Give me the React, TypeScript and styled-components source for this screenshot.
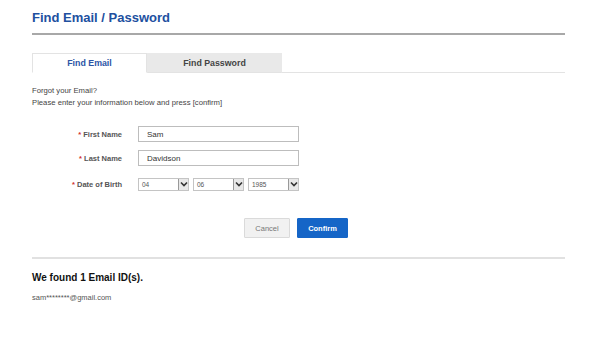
import React from 'react';
import styled, {createGlobalStyle} from "styled-components";

const GlobalStyle = createGlobalStyle`
  body {
    margin: 0;
    background: #fff;
    font-family: "Liberation Sans", Arial, sans-serif;
  }
`

const fields = [
    {label: "First Name", value: "Sam"},
    {label: "Last Name", value: "Davidson"},
]

const Chevron = () => (
    <svg width="8" height="6" viewBox="0 0 8 6">
        <path d="M1 1.5 L4 4.5 L7 1.5" fill="none" stroke="#333" strokeWidth="1.6"/>
    </svg>
)

const Select = ({value}: { value: string }) => (
    <SelectBox>
        <span>{value}</span>
        <ArrowBox><Chevron/></ArrowBox>
    </SelectBox>
)

export default function App() {
    return (
        <Page>
            <GlobalStyle/>
            <Title>Find Email / Password</Title>

            <Tabs>
                <Tab active>Find Email</Tab>
                <Tab>Find Password</Tab>
            </Tabs>

            <Intro>
                Forgot your Email?<br/>
                Please enter your information below and press [confirm]
            </Intro>

            <Form>
                {fields.map(f => (
                    <Row key={f.label}>
                        <Label><Star>*</Star> {f.label}</Label>
                        <TextInput>{f.value}</TextInput>
                    </Row>
                ))}
                <Row>
                    <Label><Star>*</Star> Date of Birth</Label>
                    <SelectGroup>
                        <Select value="04"/>
                        <Select value="06"/>
                        <Select value="1985"/>
                    </SelectGroup>
                </Row>
            </Form>

            <Buttons>
                <Button>Cancel</Button>
                <Button primary>Confirm</Button>
            </Buttons>

            <Result>
                <ResultTitle>We found 1 Email ID(s).</ResultTitle>
                <ResultText>sam********@gmail.com</ResultText>
            </Result>
        </Page>
    );
}

const Page = styled.div`
  width: 533px;
  margin-left: 32px;
  padding-top: 8px;
`

const Title = styled.h1`
  margin: 0;
  font-size: 13px;
  font-weight: bold;
  color: #21509f;
  line-height: 20px;
  padding-bottom: 5px;
  border-bottom: 2px solid #a8a8a8;
`

const Tabs = styled.div`
  display: flex;
  margin-top: 18px;
  height: 19px;
  border-bottom: 1px solid #e3e3e3;
`

const Tab = styled.div<{ active?: boolean }>`
  display: flex;
  align-items: center;
  justify-content: center;
  box-sizing: border-box;
  width: ${p => p.active ? 115 : 135}px;
  height: 20px;
  font-size: 8.8px;
  font-weight: bold;
  color: ${p => p.active ? "#2c55a6" : "#444"};
  background: ${p => p.active ? "#fff" : "#e9e9e9"};
  border: 1px solid ${p => p.active ? "#e3e3e3" : "#e9e9e9"};
  border-bottom: ${p => p.active ? "1px solid #fff" : "1px solid #e3e3e3"};
`

const Intro = styled.p`
  margin: 12px 0 0;
  font-size: 7.7px;
  line-height: 12px;
  color: #444;
`

const Form = styled.div`
  display: flex;
  flex-direction: column;
  gap: 8px;
  margin-top: 17px;
`

const Row = styled.div`
  display: flex;
  align-items: center;
  height: 16px;

  &:last-child {
    margin-top: 2px;
  }
`

const Label = styled.div`
  width: 90px;
  margin-right: 16px;
  text-align: right;
  font-size: 7.5px;
  font-weight: bold;
  color: #555;
`

const Star = styled.span`
  color: #d0302c;
`

const TextInput = styled.div`
  box-sizing: border-box;
  width: 161px;
  height: 16px;
  padding-left: 8px;
  display: flex;
  align-items: center;
  border: 1px solid #bdbdbd;
  font-size: 8px;
  color: #333;
`

const SelectGroup = styled.div`
  display: flex;
  gap: 4px;
`

const SelectBox = styled.div`
  box-sizing: border-box;
  width: 51px;
  height: 13px;
  display: flex;
  align-items: center;
  justify-content: space-between;
  padding-left: 3px;
  border: 1px solid #c4c4c4;
  font-size: 6.5px;
  color: #555;
`

const ArrowBox = styled.div`
  width: 10px;
  height: 11px;
  display: flex;
  align-items: center;
  justify-content: center;
  background: #e8e8e8;
  border-left: 1px solid #999;
  box-sizing: border-box;
`

const Buttons = styled.div`
  display: flex;
  justify-content: center;
  gap: 7px;
  margin-top: 26px;
  padding-right: 5px;
`

const Button = styled.div<{ primary?: boolean }>`
  display: flex;
  align-items: center;
  justify-content: center;
  box-sizing: border-box;
  width: ${p => p.primary ? 51 : 46}px;
  height: 20px;
  font-size: 7.5px;
  font-weight: ${p => p.primary ? "bold" : "normal"};
  color: ${p => p.primary ? "#fff" : "#777"};
  background: ${p => p.primary ? "#1565c7" : "#f1f1f1"};
  border: 1px solid ${p => p.primary ? "#1565c7" : "#dadada"};
  border-radius: 1px;
`

const Result = styled.div`
  margin-top: 19px;
  border-top: 2px solid #e1e1e1;
  padding-top: 12px;
`

const ResultTitle = styled.h2`
  margin: 0;
  font-size: 10px;
  font-weight: bold;
  color: #111;
  line-height: 14px;
`

const ResultText = styled.div`
  margin-top: 8px;
  font-size: 7.5px;
  color: #555;
`
